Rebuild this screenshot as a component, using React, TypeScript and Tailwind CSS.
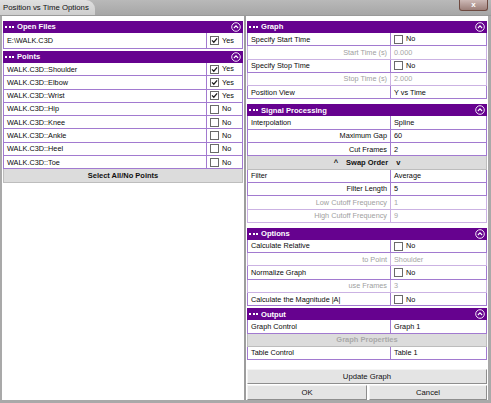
import React from "react";

const FONT = { fontFamily: "'Liberation Sans', Arial, sans-serif" };

function Dots() {
  return (
    <div className="flex gap-[1.5px] items-center">
      <span className="block w-[2px] h-[2px] bg-white" />
      <span className="block w-[2px] h-[2px] bg-white" />
      <span className="block w-[2px] h-[2px] bg-white" />
    </div>
  );
}

function Header({ title, className = "" }: { title: string; className?: string }) {
  return (
    <div className={`h-[12px] bg-[#66028f] flex items-center pl-[2px] pr-[2px] ${className}`}>
      <Dots />
      <span className="ml-[3px] text-white font-bold text-[7.6px] leading-none">{title}</span>
      <svg className="ml-auto" width="10" height="10" viewBox="0 0 10 10">
        <circle cx="5" cy="5" r="4.3" fill="none" stroke="white" strokeWidth="0.9" />
        <path d="M2.9 6 L5 3.9 L7.1 6" stroke="white" fill="none" strokeWidth="1.1" />
      </svg>
    </div>
  );
}

function Check({ on, label }: { on?: boolean; label: string }) {
  return (
    <span className="flex items-center">
      <span className="w-[9px] h-[9px] border border-[#6a6a6a] bg-white flex items-center justify-center">
        {on && (
          <svg width="7" height="7" viewBox="0 0 7 7">
            <path d="M1 3.4 L2.8 5.2 L6.1 1.4" stroke="#1e1e1e" strokeWidth="1.3" fill="none" />
          </svg>
        )}
      </span>
      <span className="ml-[3px]">{label}</span>
    </span>
  );
}

function Row({
  label,
  value,
  right,
  dim,
  lw,
  tall,
}: {
  label: string;
  value?: React.ReactNode;
  right?: boolean;
  dim?: boolean;
  lw: string;
  tall?: boolean;
}) {
  return (
    <div
      className={`flex ${tall ? "h-[16px]" : "h-[13.3px]"} border-x border-b ${
        dim ? "border-[#cbb2e3]" : "border-[#a27ad0]"
      } text-[7.3px] leading-none`}
    >
      <div
        className={`${lw} shrink-0 h-full flex items-center px-[3px] border-r ${
          dim ? "border-[#cbb2e3] text-[#a0a0a0]" : "border-[#a27ad0] text-[#0a0a0a]"
        } ${right ? "justify-end" : ""}`}
      >
        {label}
      </div>
      <div
        className={`flex-1 h-full flex items-center pl-[3px] ${
          dim ? "text-[#a6a6a6]" : "text-[#0a0a0a]"
        }`}
      >
        {value}
      </div>
    </div>
  );
}

function GrayBar({ children, dim }: { children: React.ReactNode; dim?: boolean }) {
  return (
    <div
      className={`h-[13.3px] flex items-center justify-center bg-[#dcdcdc] border-x border-b border-[#bdbdbd] text-[7.5px] font-bold leading-none ${
        dim ? "text-[#a9a9a9]" : "text-[#111111]"
      }`}
    >
      {children}
    </div>
  );
}

function Btn({ children, className = "" }: { children: React.ReactNode; className?: string }) {
  return (
    <div
      className={`h-[15px] flex items-center justify-center bg-[#e4e4e4] border border-t-[#f4f4f4] border-l-[#f4f4f4] border-r-[#8e8e8e] border-b-[#8e8e8e] text-[7.7px] text-[#111111] leading-none ${className}`}
    >
      {children}
    </div>
  );
}

const LW = "w-[203px]";
const RW = "w-[143px]";

export default function App() {
  const points: [string, boolean][] = [
    ["WALK.C3D::Shoulder", true],
    ["WALK.C3D::Elbow", true],
    ["WALK.C3D::Wrist", true],
    ["WALK.C3D::Hip", false],
    ["WALK.C3D::Knee", false],
    ["WALK.C3D::Ankle", false],
    ["WALK.C3D::Heel", false],
    ["WALK.C3D::Toe", false],
  ];
  return (
    <div className="w-[491px] h-[403px] bg-[#a9a9a9] overflow-hidden flex flex-col" style={FONT}>
      {/* Title bar */}
      <div className="h-[16px] shrink-0 flex items-start bg-gradient-to-b from-[#b9b9b9] to-[#a6a6a6] border-b border-[#9a9a9a]">
        <div className="h-[15px] pl-[3px] pr-[6px] bg-gradient-to-b from-[#e0e0e0] to-[#cdcdcd] rounded-tr-[9px] flex items-center text-[7.8px] text-[#111111] leading-none">
          Position vs Time Options
        </div>
        <div className="ml-auto mr-[3px] w-[29px] h-[11px] rounded-b-[3px] border border-t-0 border-[#6e4a40] bg-gradient-to-b from-[#cdb9b6] to-[#9c7f79] flex items-center justify-center text-white font-bold text-[8px] leading-none">
          x
        </div>
      </div>

      {/* Body */}
      <div className="flex h-[384px] shrink-0 pl-[2px]">
        {/* Left panel */}
        <div className="w-[242px] bg-white pt-[5px] px-[1px]">
          <Header title="Open Files" />
          <Row lw={LW} tall label={"E:\\WALK.C3D"} value={<Check on label="Yes" />} />
          <Header title="Points" className="mt-[2px]" />
          {points.map(([p, on]) => (
            <Row key={p} lw={LW} label={p} value={<Check on={on} label={on ? "Yes" : "No"} />} />
          ))}
          <GrayBar>Select All/No Points</GrayBar>
        </div>

        <div className="w-[2px] bg-[#9d9d9d]" />

        {/* Right panel */}
        <div className="w-[242px] bg-white pt-[5px] px-[1px] flex flex-col">
          <Header title="Graph" />
          <Row lw={RW} label="Specify Start Time" value={<Check label="No" />} />
          <Row lw={RW} dim right label="Start Time (s)" value="0.000" />
          <Row lw={RW} label="Specify Stop Time" value={<Check label="No" />} />
          <Row lw={RW} dim right label="Stop Time (s)" value="2.000" />
          <Row lw={RW} label="Position View" value="Y vs Time" />

          <Header title="Signal Processing" className="mt-[5px]" />
          <Row lw={RW} label="Interpolation" value="Spline" />
          <Row lw={RW} right label="Maximum Gap" value="60" />
          <Row lw={RW} right label="Cut Frames" value="2" />
          <GrayBar>
            <span className="mr-[8px]">^</span>
            <span>Swap Order</span>
            <span className="ml-[8px]">v</span>
          </GrayBar>
          <Row lw={RW} label="Filter" value="Average" />
          <Row lw={RW} right label="Filter Length" value="5" />
          <Row lw={RW} dim right label="Low Cutoff Frequency" value="1" />
          <Row lw={RW} dim right label="High Cutoff Frequency" value="9" />

          <Header title="Options" className="mt-[5px]" />
          <Row lw={RW} label="Calculate Relative" value={<Check label="No" />} />
          <Row lw={RW} dim right label="to Point" value="Shoulder" />
          <Row lw={RW} label="Normalize Graph" value={<Check label="No" />} />
          <Row lw={RW} dim right label="use Frames" value="3" />
          <Row lw={RW} label="Calculate the Magnitude |A|" value={<Check label="No" />} />

          <Header title="Output" className="mt-[2px]" />
          <Row lw={RW} label="Graph Control" value="Graph 1" />
          <GrayBar dim>Graph Properties</GrayBar>
          <Row lw={RW} label="Table Control" value="Table 1" />

          <div className="mt-auto">
            <Btn>Update Graph</Btn>
            <div className="flex gap-[2px] mt-[1px]">
              <Btn className="w-[120px]">OK</Btn>
              <Btn className="flex-1">Cancel</Btn>
            </div>
          </div>
        </div>
        <div className="w-[3px] bg-[#a9a9a9]" />
      </div>
    </div>
  );
}
